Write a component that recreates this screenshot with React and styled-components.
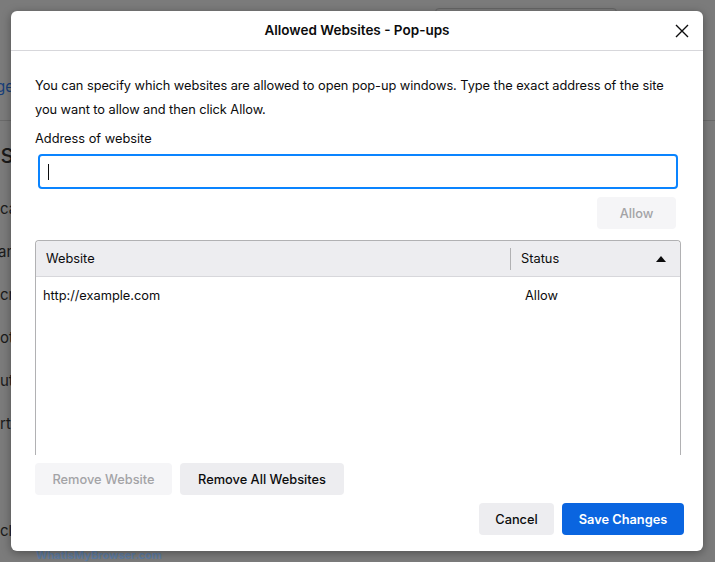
import React from "react";
import styled, { createGlobalStyle } from "styled-components";

const G = createGlobalStyle`
  html,body{margin:0;padding:0;background:#7b7b7b;}
  body{font-family:"Inter","Liberation Sans",sans-serif;-webkit-font-smoothing:antialiased;}
`;
const Page = styled.div`
  position:relative;width:715px;height:562px;overflow:hidden;background:#7b7b7b;
`;
const BgCol = styled.div`
  display:flex;flex-direction:column;padding-top:76px;color:#1d1d1d;font-size:15px;
`;
const BgItem = styled.div`
  height:${p=>p.h||43}px;line-height:${p=>p.h||43}px;font-size:${p=>p.size||15}px;color:${p=>p.c||"#1a1a1a"};
  border-top:${p=>p.line?"1px solid #6a6a6a":"none"};margin-left:-${p=>p.shift||0}px;
`;
const Watermark = styled.div`
  position:absolute;left:36px;top:548px;font-size:11px;font-weight:700;color:#5d7ba3;
`;
const TopBox = styled.div`
  position:absolute;left:435px;top:8px;width:180px;height:6px;border:1px solid #666;border-radius:4px;
`;
const Dialog = styled.div`
  position:absolute;left:11px;top:11px;width:692px;height:540px;background:#fff;border-radius:6px;
  box-shadow:0 2px 10px rgba(0,0,0,.35);display:flex;flex-direction:column;overflow:hidden;
`;
const Header = styled.div`
  height:40px;border-bottom:1px solid #d7d7db;display:flex;align-items:center;justify-content:center;position:relative;
  font-size:13.5px;font-weight:600;color:#0c0c0d;padding-top:0;box-sizing:border-box;
  & > span{margin-top:-1px;}
`;
const Close = styled.button`
  position:absolute;right:12px;top:11px;border:0;background:none;padding:0;width:18px;height:18px;
`;
const Body = styled.div`
  padding:23px 23px 0 24px;display:flex;flex-direction:column;flex:1;color:#0c0c0d;font-size:12.8px;
`;
const Desc = styled.p`margin:0;line-height:24px;letter-spacing:-0.05px;`;
const Label = styled.div`margin-top:9px;line-height:16px;`;
const Input = styled.div`
  margin:7px 2px 0 3px;height:31px;border:2px solid #0a84ff;border-radius:4px;display:flex;align-items:center;padding-left:8px;
  &::before{content:"";width:1px;height:16px;background:#0c0c0d;}
`;
const Row = styled.div`display:flex;justify-content:${p=>p.end?"flex-end":"flex-start"};gap:8px;margin-top:${p=>p.mt||0}px;margin-right:${p=>p.mr||0}px;`;
const Btn = styled.div`
  height:32px;padding:0 16px;border-radius:4px;display:flex;align-items:center;font-size:12.8px;
  font-weight:${p=>p.primary?600:500};
  background:${p=>p.primary?"#0a65e0":p.disabled?"#f5f5f7":"#ededf0"};
  color:${p=>p.primary?"#fff":p.disabled?"#a3a3a6":"#0c0c0d"};
  min-width:${p=>p.w||0}px;justify-content:center;box-sizing:border-box;
`;
const Table = styled.div`
  margin-top:11px;margin-right:-1px;height:214px;border:1px solid #b1b1b3;border-bottom:0;border-radius:4px 4px 0 0;display:flex;flex-direction:column;
`;
const THead = styled.div`
  height:35px;background:#ededf0;border-bottom:1px solid #d7d7db;display:grid;grid-template-columns:474px 1fr;align-items:center;border-radius:4px 4px 0 0;
`;
const Th = styled.div`
  display:flex;align-items:center;justify-content:space-between;padding-left:10px;padding-right:14px;height:22px;
  border-left:${p=>p.sep?"1px solid #b1b1b3":"none"};
`;
const TRow = styled.div`display:grid;grid-template-columns:474px 1fr;height:36px;align-items:center;`;
const Td = styled.div`padding-left:${p=>p.pl||7}px;`;

export default function App(){
  return <Page>
    <G/>
    <BgCol>
      <BgItem h={22} c="#173f7a" shift={4}>ge</BgItem>
      <BgItem h={22}/>
      <BgItem line h={66} size={26} shift={6}>is</BgItem>
      <BgItem>ca</BgItem>
      <BgItem shift={2}>am</BgItem>
      <BgItem>cr</BgItem>
      <BgItem>oti</BgItem>
      <BgItem>uto</BgItem>
      <BgItem>rt</BgItem>
      <BgItem h={64}/>
      <BgItem>cl</BgItem>
      <BgItem>rry</BgItem>
    </BgCol>
    <TopBox/>
    <Watermark>WhatIsMyBrowser.com</Watermark>
    <Dialog>
      <Header>
        <span>Allowed Websites - Pop-ups</span>
        <Close aria-label="close"><svg width="18" height="18" viewBox="0 0 18 18"><path d="M3 3L15 15M15 3L3 15" stroke="#0c0c0d" strokeWidth="1.4"/></svg></Close>
      </Header>
      <Body>
        <Desc>You can specify which websites are allowed to open pop-up windows. Type the exact address of the site you want to allow and then click Allow.</Desc>
        <Label>Address of website</Label>
        <Input/>
        <Row end mt={8} mr={4}><Btn disabled w={79}>Allow</Btn></Row>
        <Table>
          <THead>
            <Th>Website</Th>
            <Th sep>Status<svg width="10" height="6" viewBox="0 0 10 6"><path d="M0 6L5 0L10 6Z" fill="#0c0c0d"/></svg></Th>
          </THead>
          <TRow><Td>http://example.com</Td><Td pl={15}>Allow</Td></TRow>
        </Table>
        <Row mt={8}><Btn disabled w={137}>Remove Website</Btn><Btn w={164}>Remove All Websites</Btn></Row>
        <Row end mt={8} mr={-4}><Btn w={75}>Cancel</Btn><Btn primary w={122}>Save Changes</Btn></Row>
      </Body>
    </Dialog>
  </Page>;
}
